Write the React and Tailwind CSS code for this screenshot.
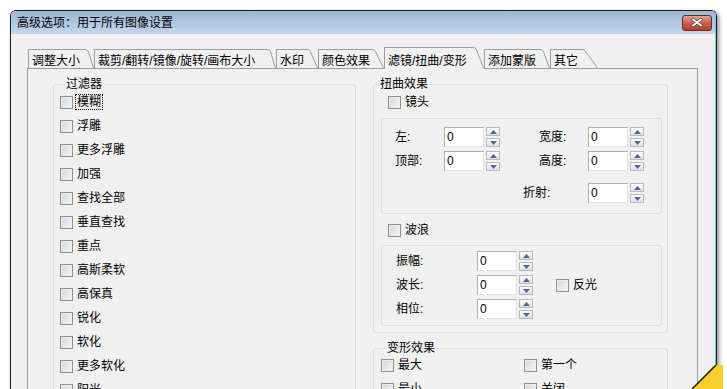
function Box() {
  return (
    <span className="block h-[13px] w-[13px] shrink-0 border border-[#8e8f8f] bg-linear-to-br from-[#d4d4d4] to-[#f8f8f8] shadow-[inset_0_0_0_1px_#eeeeee]" />
  );
}

function Check({ label, focus, className = "", h = "h-6" }) {
  return (
    <div className={"flex items-center " + h + " " + className}>
      <Box />
      {focus ? (
        <span className="ml-[3px] px-px leading-[14px] outline-1 outline-dotted outline-black">{label}</span>
      ) : (
        <span className="ml-1 leading-[14px]">{label}</span>
      )}
    </div>
  );
}

function SpinBtn({ up }) {
  return (
    <div className="flex h-[9px] w-[14px] items-center justify-center border border-[#b9b9b9] bg-linear-to-b from-white to-[#dfe1e6]">
      <svg width="7" height="4" viewBox="0 0 7 4">
        <path d={up ? "M0 4L3.5 0L7 4Z" : "M0 0L7 0L3.5 4Z"} fill="#50629a" />
      </svg>
    </div>
  );
}

function Num() {
  return (
    <div className="flex items-center gap-[2px]">
      <div className="h-5 w-10 border border-[#abadb3] border-r-[#dbdfe6] border-b-[#e3e9ef] bg-white pl-[2px] leading-[18px]">0</div>
      <div className="flex flex-col gap-[2px]">
        <SpinBtn up />
        <SpinBtn />
      </div>
    </div>
  );
}

function Tab({ label, w, s, sel }) {
  const h = sel ? 22 : 19;
  const line = sel ? 21 : 19;
  return (
    <div className={sel ? "relative z-10 -mb-px flex h-[22px]" : "flex h-[19px]"}>
      <div
        className={
          "whitespace-nowrap border-l border-t border-[#9c9c9c] bg-[#f0f0f0] pl-[3px] leading-[14px] " +
          (sel ? "pt-[6px] " : "pt-[4px] ") +
          w
        }
      >
        {label}
      </div>
      <svg width={s} height={h} className="shrink-0">
        <path d={`M0 0L${s} ${line}L${s} ${h}L0 ${h}Z`} fill="#f0f0f0" />
        <path d={`M0 0.5Q2 0.5 3.2 2L${s - 0.5} ${line}`} fill="none" stroke="#9c9c9c" />
      </svg>
    </div>
  );
}

const filters = [
  "模糊", "浮雕", "更多浮雕", "加强", "查找全部", "垂直查找", "重点",
  "高斯柔软", "高保真", "锐化", "软化", "更多软化", "阳光",
];

export default function App() {
  return (
    <div className="relative h-[389px] w-[727px] overflow-hidden bg-white pl-[10px] pt-[10px] font-['Liberation_Sans','Noto_Sans_CJK_SC',sans-serif] text-[12px] text-black">
      <div className="h-[420px] w-[707px] overflow-hidden rounded-t-[6px] border border-b-0 border-[#1e1e1e] shadow-[2px_2px_4px_rgba(0,0,0,0.45)]">
        <div className="h-full border-r border-[#6cc6ec] bg-[#f0f0f0]">
          {/* title bar */}
          <div className="flex h-[23px] items-center justify-between bg-linear-to-b from-[#9db6d5] to-[#c3d6eb] pl-[6px] pr-[3px]">
            <span className="leading-[14px]">高级选项：用于所有图像设置</span>
            <div className="flex h-4 w-[30px] items-center justify-center rounded-[3px] border border-[#6b2a22] bg-linear-to-b from-[#e4a697] via-[#c8604c] to-[#b3412f]">
              <svg width="12" height="9" viewBox="0 0 12 9">
                <path d="M2 1.5L10 7.5M10 1.5L2 7.5" stroke="#5a3a36" strokeWidth="3.2" strokeLinecap="round" />
                <path d="M2 1.5L10 7.5M10 1.5L2 7.5" stroke="#ffffff" strokeWidth="1.8" strokeLinecap="round" />
              </svg>
            </div>
          </div>

          {/* body */}
          <div className="pl-4 pt-[13px]">
            <div className="flex items-end pl-px">
              <Tab label="调整大小" w="w-[57px]" s={9} />
              <Tab label="裁剪/翻转/镜像/旋转/画布大小" w="w-[173px]" s={9} />
              <Tab label="水印" w="w-[31px]" s={11} />
              <Tab label="颜色效果" w="w-[54px]" s={12} />
              <Tab label="滤镜/扭曲/变形" w="w-[89px]" s={11} sel />
              <Tab label="添加蒙版" w="w-[56px]" s={10} />
              <Tab label="其它" w="w-[32px]" s={16} />
            </div>

            <div className="h-[340px] w-[671px] border border-[#9c9c9c] bg-[#f0f0f0] pl-[25px] pt-2">
              <div className="flex items-start gap-[17px]">
                {/* filters */}
                <fieldset className="w-[303px] rounded-[3px] border border-[#d6dde3] pl-[6px]">
                  <legend className="ml-[5px] px-px leading-[14px]">过滤器</legend>
                  <div className="-mt-px">
                    {filters.map((f, i) => (
                      <Check key={f} label={f} focus={i === 0} />
                    ))}
                  </div>
                </fieldset>

                <div className="flex flex-col">
                  {/* distortion */}
                  <fieldset className="w-[295px] rounded-[3px] border border-[#d6dde3] pb-[6px]">
                    <legend className="ml-[5px] px-px leading-[14px]">扭曲效果</legend>
                    <Check label="镜头" className="-mt-px pl-[14px]" />
                    <div className="ml-[7px] mr-[5px] mt-1 flex flex-col rounded-[3px] border border-[#d6dde3] pb-[10px] pl-[13px] pt-2">
                      <div className="flex items-center">
                        <span className="w-[49px]">左:</span>
                        <Num />
                        <span className="ml-[39px] w-[49px]">宽度:</span>
                        <Num />
                      </div>
                      <div className="mt-1 flex items-center">
                        <span className="w-[49px]">顶部:</span>
                        <Num />
                        <span className="ml-[39px] w-[49px]">高度:</span>
                        <Num />
                      </div>
                      <div className="mt-3 flex items-center">
                        <span className="ml-[128px] w-[65px]">折射:</span>
                        <Num />
                      </div>
                    </div>
                    <Check label="波浪" className="mt-1 pl-[14px]" />
                    <div className="ml-[7px] mr-[5px] mt-[3px] flex flex-col gap-1 rounded-[3px] border border-[#d6dde3] pb-[6px] pl-[14px] pt-[5px]">
                      <div className="flex items-center">
                        <span className="w-[81px]">振幅:</span>
                        <Num />
                      </div>
                      <div className="flex items-center">
                        <span className="w-[81px]">波长:</span>
                        <Num />
                        <Check label="反光" h="h-5" className="ml-[23px]" />
                      </div>
                      <div className="flex items-center">
                        <span className="w-[81px]">相位:</span>
                        <Num />
                      </div>
                    </div>
                  </fieldset>

                  {/* transform */}
                  <fieldset className="mt-2 w-[295px] rounded-[3px] border border-[#d6dde3] pl-[7px]">
                    <legend className="ml-[5px] px-px leading-[14px]">变形效果</legend>
                    <div className="-mt-[2px] grid grid-cols-[143px_1fr]">
                      <Check label="最大" />
                      <Check label="第一个" />
                      <Check label="最小" />
                      <Check label="关闭" />
                    </div>
                  </fieldset>
                </div>
              </div>
            </div>
          </div>
        </div>
      </div>

      {/* folded corner */}
      <svg className="absolute left-[692px] top-[365px]" width="31" height="24" viewBox="0 0 31 24">
        <path d="M24 0L31 0L31 24L0 24Z" fill="#f8d02c" />
        <path d="M24 0L0 24" stroke="#1a1a1a" strokeWidth="1.5" />
      </svg>
    </div>
  );
}
